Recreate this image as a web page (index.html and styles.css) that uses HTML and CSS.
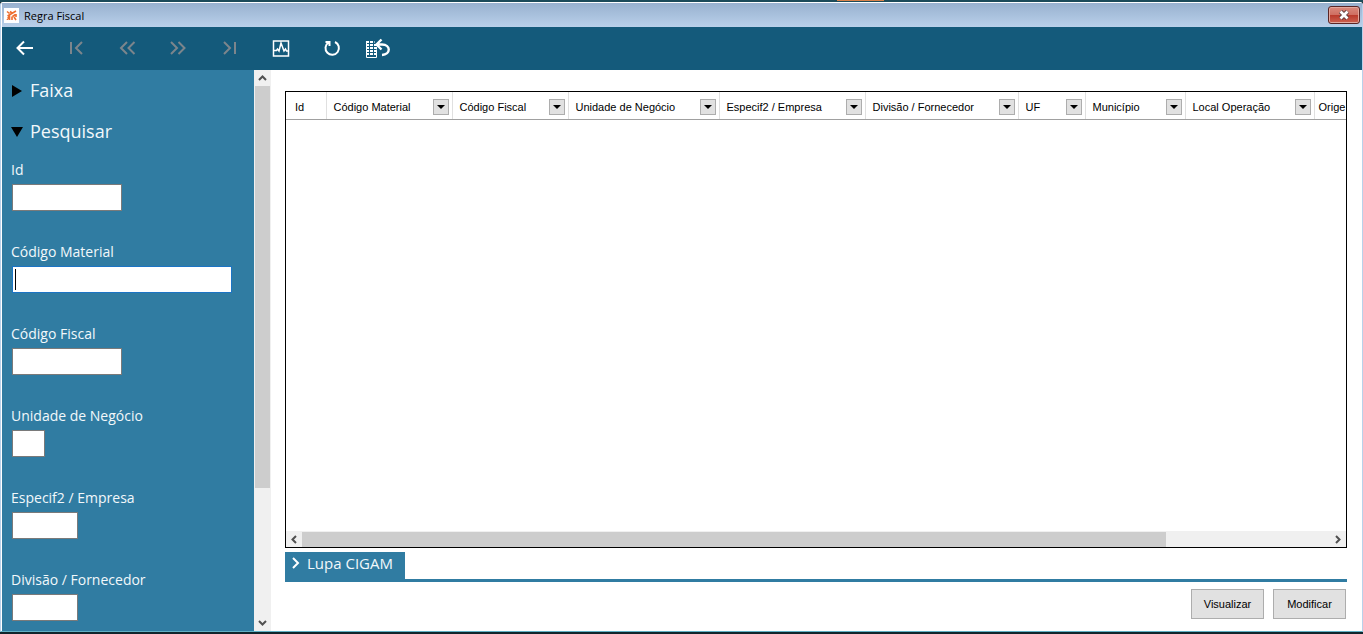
FILE: index.html
```html
<!DOCTYPE html>
<html lang="pt-BR">
<head>
    <meta charset="UTF-8">
    <meta name="viewport" content="width=device-width, initial-scale=1.0">
    <title>Regra Fiscal</title>
    <link rel="stylesheet" href="styles.css">
</head>
<body>
    <div class="backdrop"><span class="backdrop-tab"></span></div>
    <div class="window">
        <header class="titlebar">
            <svg class="app-icon" width="15" height="15" viewBox="0 0 15 15">
                <rect width="15" height="15" fill="#fff"/>
                <path d="M3 3.500l2.500 2M6 3.500l2 1.500M12 3L3.500 8M11.500 6.500l-3 2M3.500 10.500l2-2v3.500M8 8.500v3.500M10 9l2 3M12 6v3M3.500 12v-1" stroke="#ee6f30" stroke-width="1.6" fill="none"/>
            </svg>
            <h1>Regra Fiscal</h1>
            <button class="close" aria-label="Fechar">
                <svg width="12" height="10" viewBox="0 0 12 10">
                    <path d="M2.500 1.500l7 7M9.500 1.500l-7 7" stroke="#5b3b3b" stroke-width="4.500"/>
                    <path d="M2.500 1.500l7 7M9.500 1.500l-7 7" stroke="#fff" stroke-width="2.800"/>
                </svg>
            </button>
        </header>

        <nav class="toolbar">
            <button aria-label="Voltar">
                <svg width="24" height="24" viewBox="0 0 24 24"><path d="M19 11H3.500M10 4.500L3.500 11l6.500 6.500"/></svg>
            </button>
            <button aria-label="Primeiro" disabled>
                <svg width="24" height="24" viewBox="0 0 24 24"><path d="M6 5v12M17 5l-6 6 6 6"/></svg>
            </button>
            <button aria-label="Anterior" disabled>
                <svg width="24" height="24" viewBox="0 0 24 24"><path d="M11 5l-6 6 6 6M18.500 5l-6 6 6 6"/></svg>
            </button>
            <button aria-label="Próximo" disabled>
                <svg width="24" height="24" viewBox="0 0 24 24"><path d="M4 5l6 6-6 6M11.500 5l6 6-6 6"/></svg>
            </button>
            <button aria-label="Último" disabled>
                <svg width="24" height="24" viewBox="0 0 24 24"><path d="M6 5l6 6-6 6M17 5v12"/></svg>
            </button>
            <button aria-label="Gráfico">
                <svg class="thin" width="24" height="24" viewBox="0 0 24 24"><path d="M4.500 4h15v15h-15zM5 13.500h2.500l1-1.500 1.500 2 2-8 3 8 1.500-2 1 2h2"/></svg>
            </button>
            <button aria-label="Atualizar">
                <svg width="24" height="24" viewBox="0 0 24 24"><path d="M15 5a6.700 6.700 0 1 1-6.500 0.500M5.500 5h4v4"/></svg>
            </button>
            <button class="restore" aria-label="Restaurar">
                <svg width="26" height="24" viewBox="0 0 26 24">
                    <path class="sheet" d="M1 5h8.500M1 8h11M1 11h11M1 14h11M1 17h11"/>
                    <path class="edge" d="M1.500 4v16.500h10v-8"/>
                    <path class="undo" d="M16.500 2.500L11.500 7.500l5 5M12 7.500h5c9 0 9 10 0 10.500"/>
                </svg>
            </button>
        </nav>

        <div class="content">
            <aside class="sidebar">
                <details>
                    <summary><svg width="12" height="12" viewBox="0 0 12 12"><path d="M1 0l10 6-10 6z"/></svg>Faixa</summary>
                </details>
                <details open>
                    <summary><svg width="12" height="12" viewBox="0 0 12 12"><path d="M0 1h12L6 11z"/></svg>Pesquisar</summary>
                    <form class="search">
                        <label for="id">Id</label>
                        <input type="text" id="id" class="medium">
                        <label for="material">Código Material</label>
                        <input type="text" id="material" class="large active">
                        <label for="fiscal">Código Fiscal</label>
                        <input type="text" id="fiscal" class="medium">
                        <label for="unidade">Unidade de Negócio</label>
                        <input type="text" id="unidade" class="tiny">
                        <label for="empresa">Especif2 / Empresa</label>
                        <input type="text" id="empresa" class="small">
                        <label for="divisao">Divisão / Fornecedor</label>
                        <input type="text" id="divisao" class="small">
                    </form>
                </details>
            </aside>
            <div class="scroll-y">
                <svg width="9" height="16" viewBox="0 0 9 16"><path d="M1 10l3.500-3.500L8 10"/></svg>
                <div class="track"><div class="thumb"></div></div>
                <svg width="9" height="16" viewBox="0 0 9 16"><path d="M1 6l3.500 3.500L8 6"/></svg>
            </div>

            <main class="main">
                <div class="grid">
                    <div class="grid-view">
                        <table>
                            <thead>
                                <tr>
                                    <th class="col-id">Id</th>
                                    <th class="col-material"><div>Código Material<button aria-label="Filtrar Código Material"></button></div></th>
                                    <th class="col-fiscal"><div>Código Fiscal<button aria-label="Filtrar Código Fiscal"></button></div></th>
                                    <th class="col-unidade"><div>Unidade de Negócio<button aria-label="Filtrar Unidade de Negócio"></button></div></th>
                                    <th class="col-empresa"><div>Especif2 / Empresa<button aria-label="Filtrar Empresa"></button></div></th>
                                    <th class="col-divisao"><div>Divisão / Fornecedor<button aria-label="Filtrar Fornecedor"></button></div></th>
                                    <th class="col-uf"><div>UF<button aria-label="Filtrar UF"></button></div></th>
                                    <th class="col-municipio"><div>Município<button aria-label="Filtrar Município"></button></div></th>
                                    <th class="col-local"><div>Local Operação<button aria-label="Filtrar Local Operação"></button></div></th>
                                    <th class="col-origem">Orige</th>
                                </tr>
                            </thead>
                            <tbody></tbody>
                        </table>
                    </div>
                    <div class="scroll-x">
                        <svg width="16" height="9" viewBox="0 0 16 9"><path d="M10 1L6.500 4.500 10 8"/></svg>
                        <div class="track"><div class="thumb"></div></div>
                        <svg width="16" height="9" viewBox="0 0 16 9"><path d="M6 1l3.500 3.500L6 8"/></svg>
                    </div>
                </div>
                <div class="lupa">
                    <button><svg width="8" height="12" viewBox="0 0 8 12"><path d="M1 1l5 5-5 5"/></svg>Lupa CIGAM</button>
                </div>
                <div class="actions">
                    <button>Visualizar</button>
                    <button>Modificar</button>
                </div>
            </main>
        </div>
    </div>
</body>
</html>
```
FILE: styles.css
```css
* {
    box-sizing: border-box;
}
body {
    margin: 0;
    height: 100vh;
    display: flex;
    flex-direction: column;
    overflow: hidden;
    background-color: #10252c;
    font-family: "Liberation Sans", Arial, sans-serif;
    font-size: 11px;
    color: #000;
}
button {
    font: inherit;
    padding: 0;
    border: none;
}
svg {
    display: block;
    flex: none;
}
.backdrop {
    height: 2px;
    flex: none;
    background-color: #1c4b5a;
}
.backdrop-tab {
    display: block;
    width: 47px;
    height: 1px;
    margin-left: 61.4%;
    background-color: #d9824a;
}
.window {
    flex: 1;
    min-height: 0;
    margin-bottom: 2px;
    display: flex;
    flex-direction: column;
    border: 1px solid #b9d1ea;
    border-top-color: #fff;
    border-bottom-color: #5fb0c4;
    border-radius: 3px 3px 0 0;
    background-color: #fff;
    padding-left: 1px;
}
.titlebar {
    height: 24px;
    flex: none;
    display: flex;
    align-items: center;
    padding: 0 2px;
    background: linear-gradient(#98b1cf, #b9d0ea);
}
.titlebar h1 {
    flex: 1;
    margin: 0 0 0 5px;
    font-family: "Open Sans", sans-serif;
    font-size: 11px;
    font-weight: normal;
}
.close {
    width: 32px;
    height: 18px;
    display: flex;
    align-items: center;
    justify-content: center;
    border: 1px solid #5a2626;
    border-radius: 3px;
    box-shadow: inset 0 0 0 1px #e2a79c;
    background: linear-gradient(#d9897c 0%, #cf6f62 48%, #b9392b 50%, #cc6250 100%);
}
.toolbar {
    height: 43px;
    flex: none;
    display: flex;
    align-items: center;
    gap: 4px;
    background-color: #145a7b;
}
.toolbar button {
    width: 47px;
    height: 43px;
    display: flex;
    align-items: center;
    justify-content: center;
    background: none;
    color: #fff;
}
.toolbar button:disabled {
    color: #7c858c;
}
.toolbar .restore {
    width: 38px;
}
.toolbar path {
    fill: none;
    stroke: currentColor;
    stroke-width: 2;
}
.toolbar .thin path {
    stroke-width: 1.5;
}
.toolbar .sheet {
    stroke-width: 2;
    stroke-dasharray: 3 1;
}
.toolbar .edge {
    stroke-width: 1;
}
.toolbar .undo {
    stroke-width: 2.4;
}
.content {
    flex: 1;
    min-height: 0;
    display: flex;
}
.sidebar {
    width: 252px;
    flex: none;
    overflow: hidden;
    background-color: #307ca2;
    color: #f2f8fb;
    font-family: "Open Sans", sans-serif;
}
.sidebar summary {
    height: 41px;
    display: flex;
    align-items: center;
    gap: 7px;
    padding-left: 9px;
    list-style: none;
    font-size: 18px;
    line-height: 41px;
}
.sidebar summary path {
    fill: #000;
}
.search {
    display: flex;
    flex-direction: column;
    align-items: flex-start;
    padding: 7px 9px;
}
.search label {
    font-size: 14px;
    line-height: 22px;
    margin-bottom: 3px;
}
.search input {
    height: 27px;
    margin: 0 0 30px 1px;
    padding: 2px;
    border: 1px solid #7a7a7a;
    background-color: #fff;
}
.search .tiny {
    width: 33px;
}
.search .small {
    width: 66px;
}
.search .medium {
    width: 110px;
}
.search .large {
    width: 220px;
}
/* field in edition, with its text cursor */
.search .active {
    border-color: #1b74c5;
    background: linear-gradient(#000, #000) 2px center / 1px 21px no-repeat #fff;
}
.scroll-y {
    width: 17px;
    flex: none;
    display: flex;
    flex-direction: column;
    align-items: center;
    background-color: #f0f0f0;
}
.scroll-y path, .scroll-x path {
    fill: none;
    stroke: #505050;
    stroke-width: 2;
}
.scroll-y .track {
    flex: 1;
    width: 15px;
}
.scroll-y .thumb {
    height: 76%;
    background-color: #cdcdcd;
}
.main {
    flex: 1;
    min-width: 0;
    display: flex;
    flex-direction: column;
    padding: 21px 15px 12px 14px;
}
.grid {
    flex: 1;
    min-height: 0;
    display: flex;
    flex-direction: column;
    border: 1px solid #000;
}
.grid-view {
    flex: 1;
    min-height: 0;
    overflow: hidden;
}
.grid table {
    width: 100%;
    table-layout: fixed;
    border-collapse: collapse;
}
.grid th {
    height: 27px;
    padding: 3px 3px 0 7px;
    overflow: hidden;
    border-right: 1px solid #e0e0e0;
    border-bottom: 1px solid #a0a0a0;
    font-weight: normal;
    text-align: left;
    white-space: nowrap;
}
.grid th:first-child {
    padding-left: 9px;
}
.grid th:last-child {
    padding: 3px 0 0 4px;
    border-right: none;
}
.grid th div {
    display: flex;
    align-items: center;
    justify-content: space-between;
}
.grid th button {
    width: 16px;
    height: 16px;
    flex: none;
    display: flex;
    align-items: center;
    justify-content: center;
    border: 1px solid #adadad;
    background-color: #e1e1e1;
}
.grid th button::before {
    content: "";
    border: 4px solid transparent;
    border-top-color: #000;
    border-bottom: none;
}
.col-id {
    width: 40px;
}
.col-material {
    width: 126px;
}
.col-fiscal {
    width: 116px;
}
.col-unidade {
    width: 151px;
}
.col-empresa {
    width: 146px;
}
.col-divisao {
    width: 153px;
}
.col-uf {
    width: 67px;
}
.col-municipio {
    width: 100px;
}
.col-local {
    width: 129px;
}
.scroll-x {
    height: 16px;
    flex: none;
    display: flex;
    align-items: center;
    background-color: #f0f0f0;
}
.scroll-x .track {
    flex: 1;
    height: 15px;
}
.scroll-x .thumb {
    width: 84%;
    height: 100%;
    background-color: #cdcdcd;
}
.lupa {
    margin-top: 4px;
    border-bottom: 3px solid #307ca2;
}
.lupa button {
    height: 27px;
    display: flex;
    align-items: center;
    gap: 7px;
    padding: 0 12px 5px 7px;
    background-color: #307ca2;
    color: #f2f8fb;
    font-family: "Open Sans", sans-serif;
    font-size: 15px;
}
.lupa path {
    fill: none;
    stroke: #fff;
    stroke-width: 2;
}
.actions {
    display: flex;
    justify-content: flex-end;
    gap: 9px;
    padding: 7px 1px 0 0;
}
.actions button {
    width: 73px;
    height: 30px;
    border: 1px solid #adadad;
    background-color: #e1e1e1;
    color: #000;
}
```
